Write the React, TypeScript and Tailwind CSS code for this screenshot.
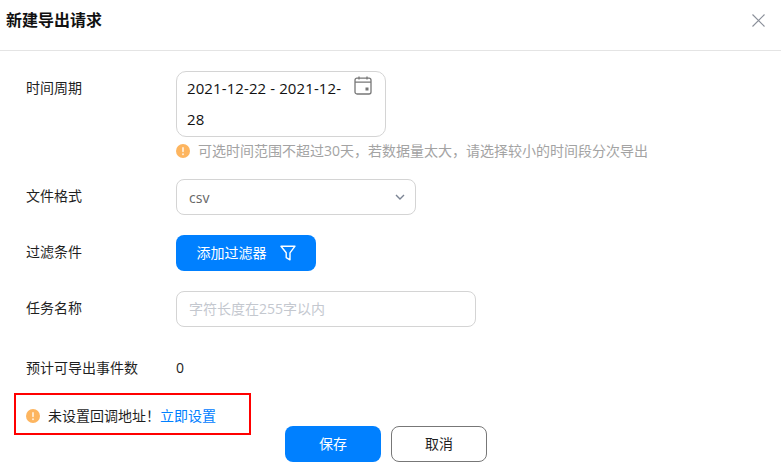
const FONT = "font-['Open_Sans','Noto_Sans_CJK_SC',sans-serif]";

function Warn() {
  return (
    <svg width="14" height="14" viewBox="0 0 14 14" className="shrink-0">
      <circle cx="7" cy="7" r="7" fill="#fdb55f" />
      <rect x="6.1" y="3" width="1.8" height="5.2" rx="0.9" fill="#fff" fillOpacity="0.75" />
      <circle cx="7" cy="10.2" r="1" fill="#fff" fillOpacity="0.75" />
    </svg>
  );
}

function CalendarIcon() {
  return (
    <svg width="18" height="19" viewBox="0 0 18 19" fill="none" stroke="#777" strokeWidth="1.3" className="shrink-0 mt-[4px]">
      <rect x="1" y="2.2" width="16" height="15.8" rx="2" />
      <path d="M1 6.2h16M5 0.5v3M13 0.5v3" />
      <rect x="11.5" y="11.5" width="3" height="3" fill="#777" stroke="none" />
    </svg>
  );
}

function FilterIcon() {
  return (
    <svg width="16" height="16" viewBox="0 0 16 16" fill="none" stroke="#fff" strokeWidth="1.4" strokeLinejoin="round" className="shrink-0">
      <path d="M1 1.2h14L10 7.8v7L6.2 12.6V7.8z" />
    </svg>
  );
}

function CloseIcon() {
  return (
    <svg width="13" height="13" viewBox="0 0 13 13" fill="none" stroke="#8a8f99" strokeWidth="1.1">
      <path d="M0.5 0.5l12 12M12.5 0.5l-12 12" />
    </svg>
  );
}

function Chevron() {
  return (
    <svg width="10" height="6" viewBox="0 0 10 6" fill="none" stroke="#7b8494" strokeWidth="1.4">
      <path d="M1 1l4 4 4-4" />
    </svg>
  );
}

function Row({ label, labelClass, className, children }: { label: string; labelClass?: string; className?: string; children: React.ReactNode }) {
  return (
    <div className={`flex items-start ${className ?? ""}`}>
      <div className={`w-[176px] shrink-0 pl-[26px] text-[14px] leading-[20px] text-[#1f1f1f] ${labelClass ?? ""}`}>{label}</div>
      {children}
    </div>
  );
}

export default function App() {
  return (
    <div className={`w-[781px] h-[475px] overflow-hidden bg-white ${FONT}`}>
      {/* Header */}
      <div className="h-[51px] border-b border-[#e4e4e4] flex items-center justify-between pl-[6px] pr-[16px] pb-[10px]">
        <h1 className="text-[16px] font-bold leading-[24px] text-[#111]">新建导出请求</h1>
        <CloseIcon />
      </div>

      {/* Form */}
      <Row label="时间周期" labelClass="pt-[7px]" className="mt-[20px]">
        <div>
          <div className="w-[210px] h-[66px] rounded-[10px] border border-[#d4d4d4] pl-[10px] pr-[13px] flex justify-between">
            <div className="whitespace-nowrap text-[15px] tracking-[0.1px] leading-[31px] pt-[1px] text-[#111]">2021-12-22 - 2021-12-<br />28</div>
            <CalendarIcon />
          </div>
          <div className="mt-[6px] flex items-center gap-[8px] text-[14px] leading-[16px] text-[#a3a3a3] whitespace-nowrap">
            <Warn />
            可选时间范围不超过30天，若数据量太大，请选择较小的时间段分次导出
          </div>
        </div>
      </Row>

      <Row label="文件格式" labelClass="pt-[7px]" className="mt-[20px]">
        <div className="w-[240px] h-[36px] rounded-[8px] border border-[#d4d4d4] pl-[12px] pr-[10px] flex items-center justify-between text-[14px] text-[#666]">
          <span className="pt-[1px]">csv</span>
          <Chevron />
        </div>
      </Row>

      <Row label="过滤条件" labelClass="pt-[7px]" className="mt-[20px]">
        <button className="w-[140px] h-[36px] rounded-[8px] bg-[#0080ff] text-white text-[14px] flex items-center justify-center gap-[13px]">
          <span className="pb-[2px]">添加过滤器</span>
          <FilterIcon />
        </button>
      </Row>

      <Row label="任务名称" labelClass="pt-[7px]" className="mt-[20px]">
        <input
          readOnly
          placeholder="字符长度在255字以内"
          className="w-[300px] h-[36px] rounded-[8px] border border-[#d4d4d4] px-[12px] pb-[2px] text-[14px] outline-none placeholder:text-[#c4c8cf]"
        />
      </Row>

      <Row label="预计可导出事件数" className="mt-[31px]">
        <div className="text-[14px] leading-[20px] text-[#222]">0</div>
      </Row>

      {/* Footer */}
      <div className="flex items-start mt-[15px]">
        <div className="ml-[14px] w-[237px] h-[42px] border-2 border-[#ff0000] pl-[10px] pt-[3px] flex items-center gap-[8px] text-[14px] text-[#1f1f1f]">
          <Warn />
          <span className="whitespace-nowrap">未设置回调地址！<span className="text-[#0080ff]">立即设置</span></span>
        </div>
        <div className="ml-[34px] mt-[33px] flex gap-[10px]">
          <button className="w-[96px] h-[36px] rounded-[8px] bg-[#0080ff] text-white text-[14px] pb-[2px]">保存</button>
          <button className="w-[96px] h-[36px] rounded-[8px] border border-[#777] text-[#1f1f1f] text-[14px] pb-[2px]">取消</button>
        </div>
      </div>
    </div>
  );
}
